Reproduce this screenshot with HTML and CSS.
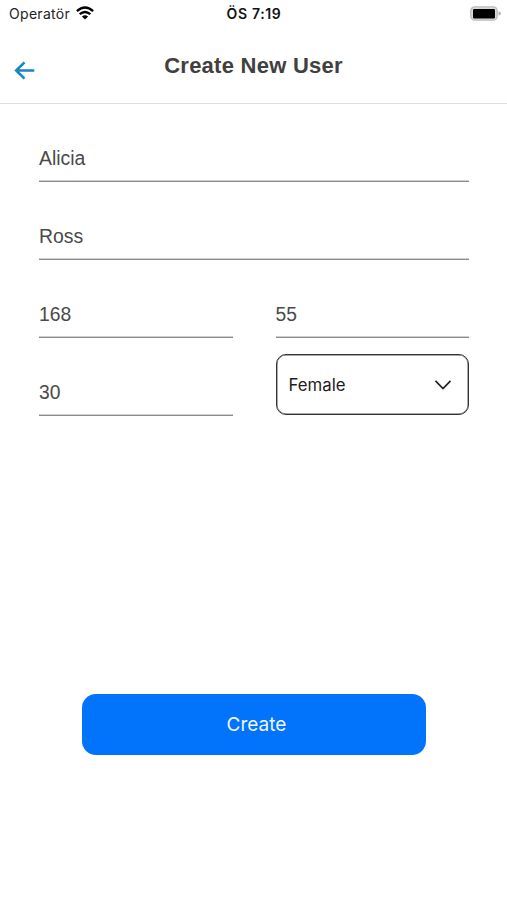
FILE: index.html
```html
<!DOCTYPE html>
<html lang="en">
<head>
<meta charset="utf-8">
<title>Create New User</title>
<link rel="stylesheet" href="styles.css">
</head>
<body>
<div class="status">
  <div class="carrier"><span>Operatör</span>
    <svg class="wifi" width="18" height="14" viewBox="0 0 18 14" fill="none" stroke="#000" stroke-width="2.4"><path d="M.9 5.2Q9-2 17.1 5.2M3.7 8.2Q9 3.6 14.3 8.2"/><path d="M9 13.5L5.9 10.4Q9 8.1 12.1 10.4Z" fill="#000" stroke="none"/></svg>
  </div>
  <div class="time">ÖS 7:19</div>
  <svg class="battery" width="32" height="16" viewBox="0 0 32 16"><rect x=".8" y=".8" width="26.4" height="13.4" rx="4" fill="#d9d9d9" stroke="#bcbcbc" stroke-width="1.3"/><rect x="3" y="3" width="22" height="9.4" rx="1.2"/><path d="M28.5 5.2Q31 6 31 7.5T28.5 9.8Z" fill="#b0b0b0"/></svg>
</div>
<header class="header">
  <svg class="back" width="22" height="20" viewBox="0 0 22 20" fill="none" stroke="#1886c2" stroke-width="2.6"><path d="M20.3 9.5H2.5M10.5 1.4L2.2 9.5L10.5 17.6"/></svg>
  <h1 class="title">Create New User</h1>
</header>
<main class="form">
  <div class="field wide">Alicia</div>
  <div class="field wide">Ross</div>
  <div class="field number">168</div>
  <div class="field number">55</div>
  <div class="field number">30</div>
  <div class="select"><span>Female</span>
    <svg width="18" height="12" viewBox="0 0 18 12" fill="none" stroke="#222" stroke-width="1.7"><path d="M1.5 1.8L9 9.5L16.5 1.8"/></svg>
  </div>
</main>
<button class="create">Create</button>
</body>
</html>
```

FILE: styles.css
```css
* { box-sizing: border-box; }
body {
  margin: 0;
  height: 900px;
  background: #fff;
  font-family: "Liberation Sans", sans-serif;
  overflow: hidden;
}
.status {
  height: 28px;
  display: grid;
  grid-template-columns: 1fr auto 1fr;
  align-items: center;
  padding: 0 5px 2px 9px;
  font-family: Inter, sans-serif;
  font-size: 14px;
  color: #222;
}
.carrier { display: flex; align-items: center; gap: 6px; letter-spacing: .3px; }
.wifi { margin-top: -1px; }
.time { font-weight: 600; font-size: 14px; letter-spacing: .65px; color: #111; margin-right: 3px; }
.battery { justify-self: end; margin-top: 1px; }
.header {
  height: 76px;
  display: grid;
  grid-template-columns: 60px 1fr 60px;
  border-bottom: 1px solid #dedede;
}
.back { margin: 33px 0 0 14px; }
.title {
  margin: 25px 0 0;
  font-size: 22px;
  line-height: 26px;
  letter-spacing: .25px;
  text-align: center;
  color: #404040;
  white-space: nowrap;
}
.form {
  display: grid;
  grid-template-columns: 1fr 1fr;
  column-gap: 43px;
  grid-auto-rows: 62px;
  row-gap: 16px;
  padding: 16px 38px 0 39px;
}
.field {
  display: flex;
  align-items: flex-end;
  padding-bottom: 12px;
  font-size: 19.4px;
  line-height: 22px;
  color: #4a4a4a;
  border-bottom: 1px solid #8c8c8c;
  box-shadow: inset 0 -1px #d0d0d0;
}
.wide { grid-column: 1 / -1; }
.number { padding-bottom: 11px; font-size: 19.3px; }
.select {
  display: flex;
  align-items: center;
  justify-content: space-between;
  margin-bottom: 1px;
  padding: 0 16px 0 12px;
  border: 1px solid #333;
  box-shadow: inset 0 0 0 .5px #555;
  border-radius: 10px;
  font-family: Inter, sans-serif;
  font-size: 16.8px;
  color: #1c1c1c;
}
.create {
  display: block;
  width: 344px;
  height: 61px;
  margin: 278px 0 0 82px;
  padding: 0 0 0 5px;
  border: 0;
  border-radius: 14px;
  background: #0273fb;
  color: #eef6ff;
  font-family: Inter, sans-serif;
  font-size: 19px;
}
```
